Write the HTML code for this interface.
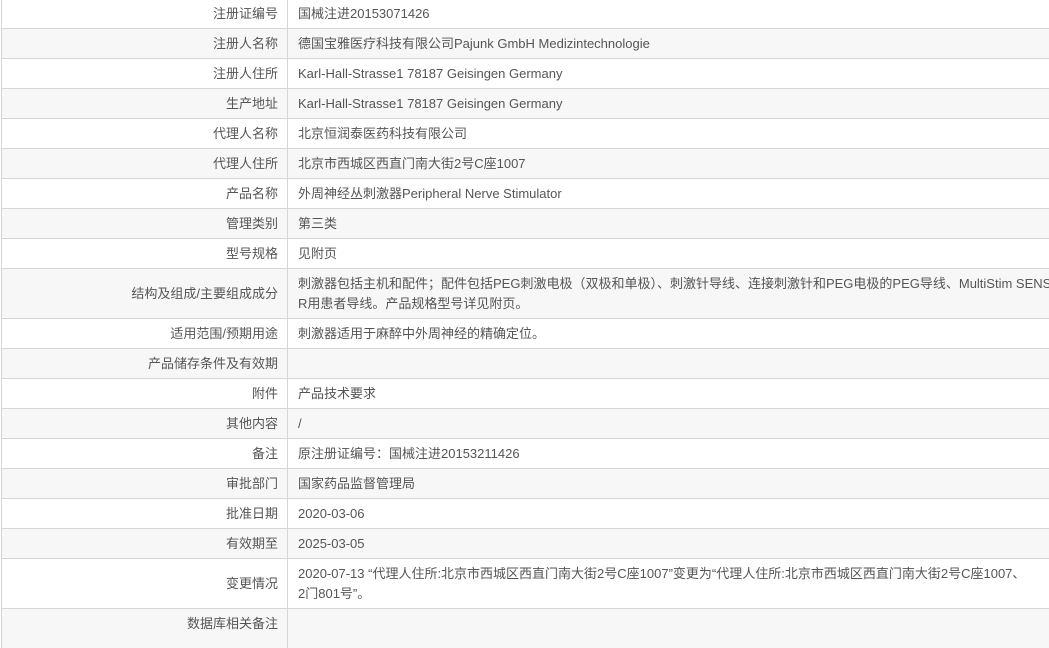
<!DOCTYPE html>
<html><head><meta charset="utf-8"><style>
body{margin:0;width:1049px;height:634px;overflow:hidden;background:#fff;font-family:"Liberation Sans","Noto Sans CJK SC",sans-serif;font-size:13px;color:#555;}
.r{position:absolute;left:1px;width:1060px;border-top:1px solid #d6d6d6;border-left:1px solid #d6d6d6;box-sizing:border-box;}
.g{background:#f7f7f7;}
.l{position:absolute;left:0;top:0;bottom:0;width:286px;border-right:1px solid #d6d6d6;display:flex;align-items:center;justify-content:flex-end;padding-right:9px;box-sizing:border-box;line-height:20px;}
.v{position:absolute;left:296px;top:0;bottom:0;width:760px;display:flex;align-items:center;line-height:20px;white-space:nowrap;}
.v span,.l span{display:block;}
</style></head><body>
<div class="r" style="top:-2px;height:31px"><div class="l"><span>注册证编号</span></div><div class="v"><span>国械注进20153071426</span></div></div>
<div class="r g" style="top:28px;height:31px"><div class="l"><span>注册人名称</span></div><div class="v"><span>德国宝雅医疗科技有限公司Pajunk GmbH Medizintechnologie</span></div></div>
<div class="r" style="top:58px;height:31px"><div class="l"><span>注册人住所</span></div><div class="v"><span>Karl-Hall-Strasse1 78187 Geisingen Germany</span></div></div>
<div class="r g" style="top:88px;height:31px"><div class="l"><span>生产地址</span></div><div class="v"><span>Karl-Hall-Strasse1 78187 Geisingen Germany</span></div></div>
<div class="r" style="top:118px;height:31px"><div class="l"><span>代理人名称</span></div><div class="v"><span>北京恒润泰医药科技有限公司</span></div></div>
<div class="r g" style="top:148px;height:31px"><div class="l"><span>代理人住所</span></div><div class="v"><span>北京市西城区西直门南大街2号C座1007</span></div></div>
<div class="r" style="top:178px;height:31px"><div class="l"><span>产品名称</span></div><div class="v"><span>外周神经丛刺激器Peripheral Nerve Stimulator</span></div></div>
<div class="r g" style="top:208px;height:31px"><div class="l"><span>管理类别</span></div><div class="v"><span>第三类</span></div></div>
<div class="r" style="top:238px;height:31px"><div class="l"><span>型号规格</span></div><div class="v"><span>见附页</span></div></div>
<div class="r g" style="top:268px;height:51px"><div class="l"><span>结构及组成/主要组成成分</span></div><div class="v"><span>刺激器包括主机和配件；配件包括PEG刺激电极（双极和单极）、刺激针导线、连接刺激针和PEG电极的PEG导线、MultiStim SENSO<br>R用患者导线。产品规格型号详见附页。</span></div></div>
<div class="r" style="top:318px;height:31px"><div class="l"><span>适用范围/预期用途</span></div><div class="v"><span>刺激器适用于麻醉中外周神经的精确定位。</span></div></div>
<div class="r g" style="top:348px;height:31px"><div class="l"><span>产品储存条件及有效期</span></div><div class="v"></div></div>
<div class="r" style="top:378px;height:31px"><div class="l"><span>附件</span></div><div class="v"><span>产品技术要求</span></div></div>
<div class="r g" style="top:408px;height:31px"><div class="l"><span>其他内容</span></div><div class="v"><span>/</span></div></div>
<div class="r" style="top:438px;height:31px"><div class="l"><span>备注</span></div><div class="v"><span>原注册证编号：国械注进20153211426</span></div></div>
<div class="r g" style="top:468px;height:31px"><div class="l"><span>审批部门</span></div><div class="v"><span>国家药品监督管理局</span></div></div>
<div class="r" style="top:498px;height:31px"><div class="l"><span>批准日期</span></div><div class="v"><span>2020-03-06</span></div></div>
<div class="r g" style="top:528px;height:31px"><div class="l"><span>有效期至</span></div><div class="v"><span>2025-03-05</span></div></div>
<div class="r" style="top:558px;height:51px"><div class="l"><span>变更情况</span></div><div class="v"><span>2020-07-13 “代理人住所:北京市西城区西直门南大街2号C座1007”变更为“代理人住所:北京市西城区西直门南大街2号C座1007、<br>2门801号”。</span></div></div>
<div class="r g" style="top:608px;height:40px"><div class="l" style="align-items:flex-start;padding-top:5px"><span>数据库相关备注</span></div><div class="v"></div></div>
</body></html>
